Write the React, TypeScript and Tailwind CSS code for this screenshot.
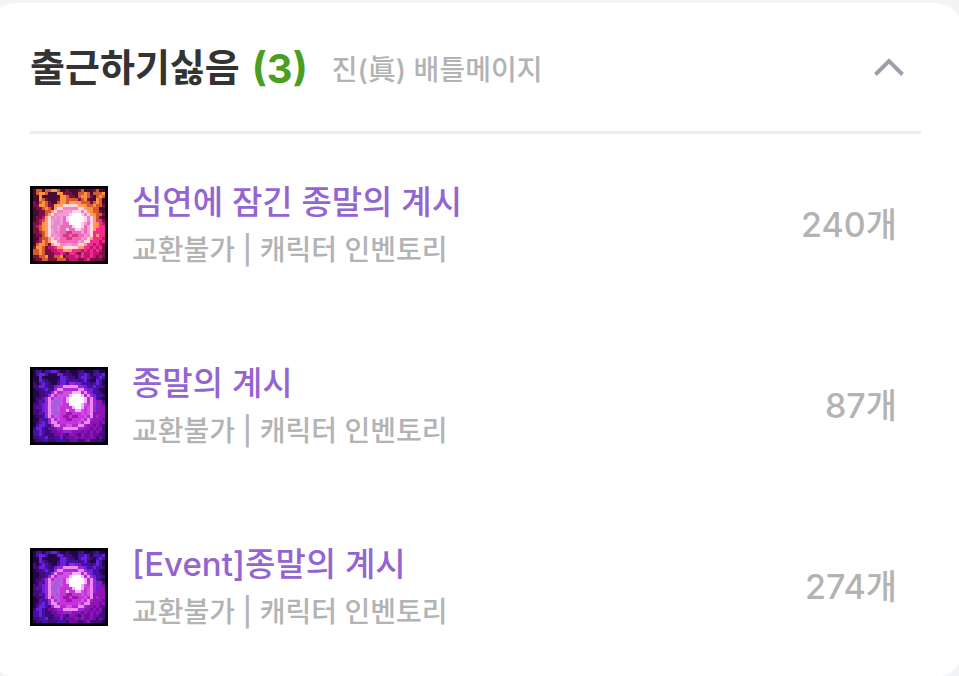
import { useState } from "react";

interface Item {
  id: string;
  name: string;
  detail: string;
  count: number;
  palette: Palette;
}

type Palette = Record<string, string>;

const EMBER: Palette = {
  k: "#090008",
  d: "#470a34",
  m: "#7a1040",
  n: "#c01570",
  o: "#d25a2c",
  y: "#fb9440",
  g: "#f52a8c",
  h: "#ff9a70",
  R: "#ffd9e2",
  S: "#fa83be",
  P: "#f069b8",
  L: "#f59ad8",
  M: "#fcd0f2",
  W: "#ffffff",
  D: "#d63a80",
  V: "#dc8fcc",
};

const VOID: Palette = {
  k: "#04000b",
  d: "#220748",
  m: "#400a78",
  n: "#6c0ea4",
  o: "#4312a4",
  y: "#6a20dc",
  g: "#9212b4",
  h: "#9a24d8",
  R: "#ee8af2",
  S: "#b02cd0",
  P: "#c832dc",
  L: "#d050e6",
  M: "#f2b4fa",
  W: "#ffffff",
  D: "#9a16ac",
  V: "#a060d8",
};

const ORB = [
  "kkkkkkkkkkkkkkkkkkkkkkkkkk",
  "kdoodooyyoddmdddmodddmoddk",
  "kdoyyodddyymmmddooyodoooyk",
  "kddyddddddyyommdoyyomdoyok",
  "kddyomdddmyyoooomoymddyodk",
  "kmdoyomddoyyohhyyooomoyodk",
  "kmmyyommyhhRRRRRhhyooyoomk",
  "kdmmoyomhRRSSSSSRRhyyooddk",
  "kddmmoohRSSLLLMMMSRhyoomdk",
  "kddmmohRSLLLLMWWWMSRhyoomk",
  "kdmmnhRSLVLPMWWWWWMSRhomdk",
  "kdmnohRLVVLPMWWWWWMSRhggmk",
  "kmmnyhRLVVLPPWWWWMLPRhygnk",
  "kmnoyhRVVLPPPPMWWMPLRhyggk",
  "kmmoyhRLVLPPMPPMMLPLRhgggk",
  "kmmnohRLVVPPDDPPPLPLRggggk",
  "kdmmohRSLVPDDPDDPPLSRghggk",
  "kddnoohRSLPPDDPPPLSRhgggnk",
  "kdmnyohRRSPPPPPPLSRRgggngk",
  "kdoyyomhRRSSLLSSRRhggngnmk",
  "kmyyomnnghhRRRRRhhggngngmk",
  "kooyommnngghhhgggngngngnmk",
  "kooyommmnngnmggnmgnngnnmmk",
  "kmmooymmooymnnngngnngnmnmk",
  "kdmmoommmooomnnnmmngmmmmdk",
  "kkkkkkkkkkkkkkkkkkkkkkkkkk",
];

const items: Item[] = [
  { id: "abyss", name: "심연에 잠긴 종말의 계시", detail: "교환불가 | 캐릭터 인벤토리", count: 240, palette: EMBER },
  { id: "revelation", name: "종말의 계시", detail: "교환불가 | 캐릭터 인벤토리", count: 87, palette: VOID },
  { id: "event", name: "[Event]종말의 계시", detail: "교환불가 | 캐릭터 인벤토리", count: 274, palette: VOID },
];

function OrbIcon({ palette }: { palette: Palette }) {
  return (
    <svg viewBox="0 0 26 26" className="size-[78px] shrink-0" shapeRendering="crispEdges" aria-hidden="true">
      {ORB.map((row, y) =>
        row.split("").map((cell, x) => (
          <rect key={`${x}-${y}`} x={x} y={y} width="1" height="1" fill={palette[cell]} />
        )),
      )}
    </svg>
  );
}

function ItemRow({ item }: { item: Item }) {
  return (
    <li className="flex items-center gap-6 py-10">
      <OrbIcon palette={item.palette} />
      <div className="min-w-0 flex-1 pt-1">
        <p className="truncate text-[33px] leading-[48px] font-medium text-[#9465d2]">{item.name}</p>
        <p className="truncate text-[28px] leading-[49px] font-medium text-[#b3b3b3]">{item.detail}</p>
      </div>
      <span className="shrink-0 pr-6 text-[34px] leading-[50px] font-medium text-[#b3b3b3]">{item.count}개</span>
    </li>
  );
}

export default function App() {
  const [open, setOpen] = useState(true);

  return (
    <main className="h-screen overflow-hidden bg-[#f3f4f6] pt-[3px] font-[Inter,'Noto_Sans_CJK_KR',sans-serif]">
      <section className="-mr-1 -ml-3 rounded-[28px] bg-white px-[42px]">
        <header className="flex h-[131px] items-center border-b-[3px] border-[#ebecef]">
          <h2 className="flex shrink-0 items-center gap-3 text-[38px] leading-[56px] font-bold text-[#333333]">
            출근하기싫음 <span className="pt-1 text-[40px] text-[#4a9f20]">({items.length})</span>
          </h2>
          <p className="ml-6 min-w-0 flex-1 truncate pt-1.5 text-[28px] leading-[41px] font-medium text-[#b3b3b3]">
            진(眞) 배틀메이지
          </p>
          <button
            type="button"
            aria-label={open ? "목록 접기" : "목록 펼치기"}
            aria-expanded={open}
            onClick={() => setOpen(!open)}
            className="mr-4 shrink-0"
          >
            <svg viewBox="0 0 32 32" className={open ? "size-8" : "size-8 rotate-180"} fill="none" aria-hidden="true">
              <path d="M2.5 23.5 16 10 29.5 23.5" stroke="#9ca0aa" strokeWidth="4" />
            </svg>
          </button>
        </header>
        {open && (
          <ul>
            {items.map((item) => (
              <ItemRow key={item.id} item={item} />
            ))}
          </ul>
        )}
      </section>
    </main>
  );
}
